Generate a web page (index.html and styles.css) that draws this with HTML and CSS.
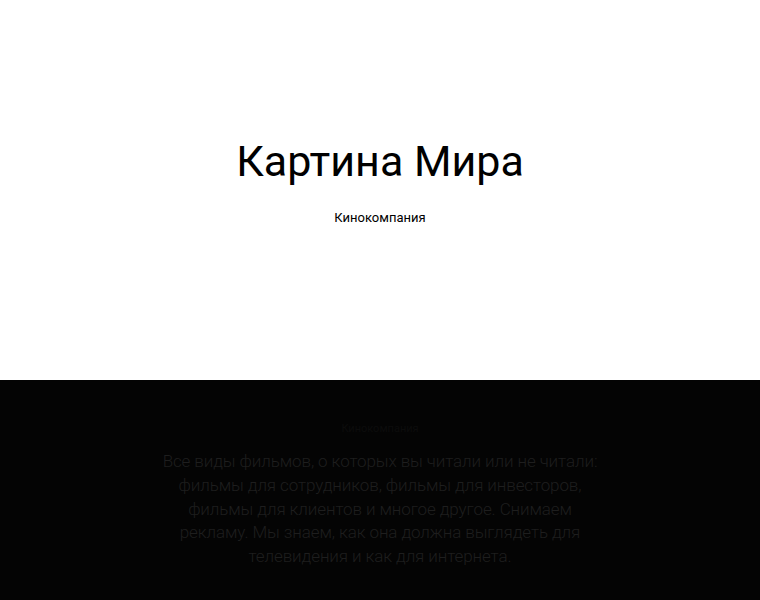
FILE: index.html
```html
<!DOCTYPE html>
<html lang="ru">
<head>
<meta charset="utf-8">
<link rel="stylesheet" href="styles.css">
</head>
<body>
<header class="hero">
  <h1 class="title">Картина Мира</h1>
  <p class="subtitle">Кинокомпания</p>
</header>
<section class="about">
  <h2 class="about-head">Кинокомпания</h2>
  <p class="about-text">Все виды фильмов, о которых вы читали или не читали: фильмы для сотрудников, фильмы для инвесторов, фильмы для клиентов и многое другое. Снимаем рекламу. Мы знаем, как она должна выглядеть для телевидения и как для интернета.</p>
</section>
</body>
</html>
```
FILE: styles.css
```css
html, body { margin: 0; padding: 0; }
body { font-family: Roboto, "Liberation Sans", sans-serif; background: #000; }
.hero {
  background: #fff;
  height: 380px;
  display: flex;
  flex-direction: column;
  align-items: center;
  box-sizing: border-box;
  padding-top: 133px;
}
.title {
  margin: 0;
  font-weight: 400;
  font-size: 43px;
  line-height: 56px;
  color: #000;
}
.subtitle {
  margin: 20px 0 0;
  font-size: 13px;
  line-height: 18px;
  color: #000;
}
.about {
  background: #040404;
  height: 220px;
  display: flex;
  flex-direction: column;
  align-items: center;
  padding-top: 42px;
  box-sizing: border-box;
}
.about-head {
  margin: 0;
  font-size: 11px;
  font-weight: 400;
  line-height: 14px;
  color: #0c0c0c;
}
.about-text {
  margin: 14px 0 0;
  width: 445px;
  text-align: center;
  font-weight: 300;
  font-size: 17px;
  line-height: 23.8px;
  letter-spacing: -0.1px;
  color: #1e1e1e;
}
```
